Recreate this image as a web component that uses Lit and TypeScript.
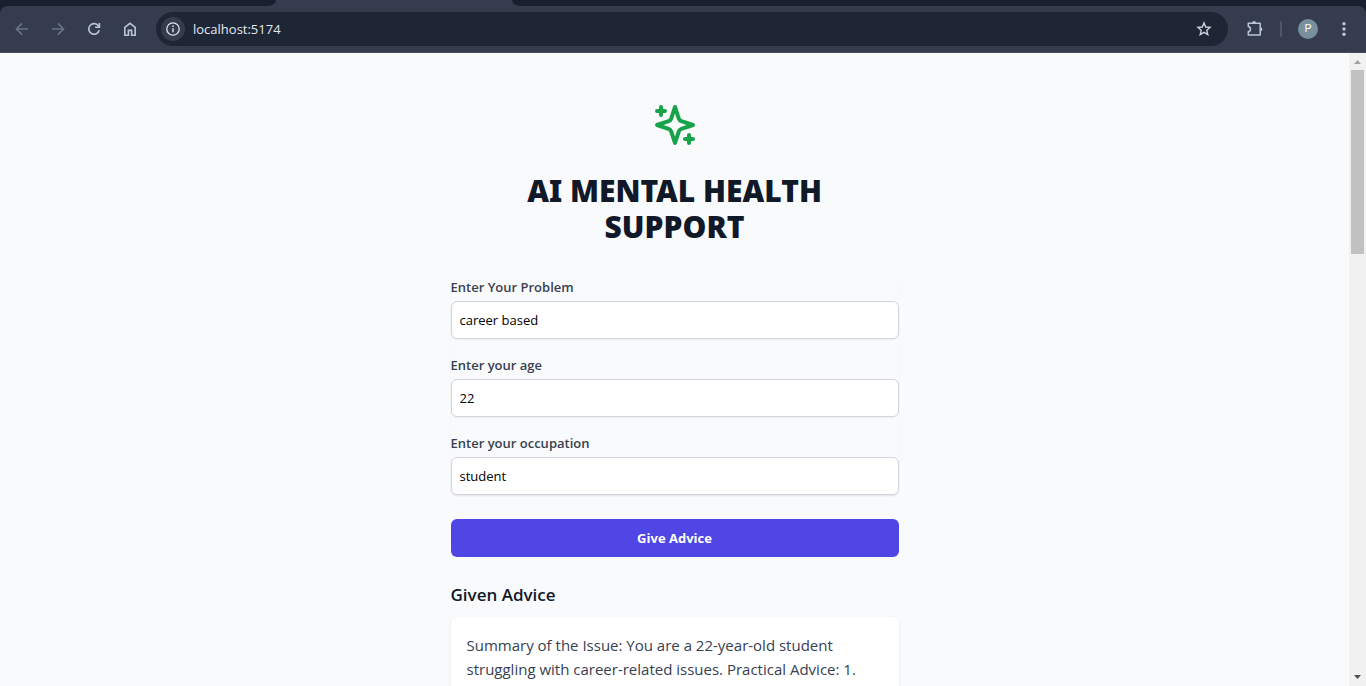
import { LitElement, html, css, svg } from "lit";
import { customElement, state } from "lit/decorators.js";

const icon = (name: string, body: unknown) =>
  html`<svg class="icon ${name}" viewBox="0 0 20 20" width="20" height="20" aria-hidden="true">${body}</svg>`;

@customElement("browser-toolbar")
export class BrowserToolbar extends LitElement {
  static styles = css`
    :host {
      display: block;
      flex: none;
      background: #1a2130;
      font-family: "Open Sans", "Noto Sans", sans-serif;
    }
    .tabs {
      display: flex;
      height: 6px;
      background: #343c4d;
    }
    .tab-left {
      width: 276px;
      background: #18202f;
      border-bottom-right-radius: 8px 6px;
    }
    .tab-active {
      width: 236px;
    }
    .tab-rest {
      flex: 1;
      background: #18202f;
      border-bottom-left-radius: 8px 6px;
    }
    .bar {
      display: flex;
      align-items: center;
      height: 46px;
      padding: 0 12px;
      background: #343c4d;
      border-bottom: 1px solid #454c5a;
      border-radius: 8px 8px 0 0;
      gap: 16px;
    }
    .under {
      background: #18202f;
    }
    button {
      display: grid;
      place-items: center;
      width: 20px;
      height: 20px;
      padding: 0;
      border: 0;
      background: none;
      color: #b9c5d8;
    }
    button:disabled {
      color: #6b7484;
    }
    .icon {
      display: block;
      fill: none;
      stroke: currentColor;
      stroke-width: 1.6;
    }
    .address {
      display: flex;
      align-items: center;
      flex: 1;
      height: 34px;
      padding: 0 14px 0 5px;
      border-radius: 17px;
      background: #1e2636;
    }
    .address .info {
      width: 24px;
      height: 24px;
      border-radius: 12px;
      background: #343c4d;
      color: #dfe3ea;
    }
    .url {
      flex: 1;
      min-width: 0;
      margin-left: 8px;
      padding: 0;
      border: 0;
      outline: 0;
      background: none;
      color: #e3e8f0;
      font: 13px/20px "Open Sans", "Noto Sans", sans-serif;
    }
    .address .star {
      color: #ccd0d8;
    }
    .tools {
      display: flex;
      align-items: center;
      gap: 16px;
    }
    .divider {
      width: 2px;
      height: 16px;
      border-radius: 1px;
      background: #4f5869;
    }
    .avatar {
      border-radius: 50%;
      background: #78909c;
      color: #fff;
      font: 11px/20px Roboto, sans-serif;
    }
  `;

  render() {
    return html`
      <div class="tabs">
        <div class="tab-left"></div>
        <div class="tab-active"></div>
        <div class="tab-rest"></div>
      </div>
      <div class="under">
        <div class="bar">
          <button disabled aria-label="Back">
            ${icon("back", svg`<path d="M16 10H4.6M10 4.4 4.4 10l5.6 5.6" />`)}
          </button>
          <button disabled aria-label="Forward">
            ${icon("forward", svg`<path d="M4 10h11.4M10 4.4l5.6 5.6-5.6 5.6" />`)}
          </button>
          <button aria-label="Reload">
            ${icon("reload", svg`<path d="M15.2 11.2A5.3 5.3 0 1 1 13.9 6.3L15.6 8M15.4 4v4.3h-4.3" />`)}
          </button>
          <button aria-label="Home">
            ${icon("home", svg`<path d="M4.8 8.3 10 4.3l5.2 4v7.9h-3.6v-4.8H8.4v4.8H4.8z" />`)}
          </button>
          <div class="address">
            <button class="info" aria-label="Site information">
              ${icon("site", svg`<circle cx="10" cy="10" r="6.2" stroke-width="1.3" /><path d="M10 9.2v4M10 6.4v1.5" stroke-width="1.4" />`)}
            </button>
            <input class="url" aria-label="Address" value="localhost:5174" />
            <button class="star" aria-label="Bookmark">
              ${icon("bookmark", svg`<path d="m10 3.9 1.7 4.1 4.4.4-3.3 2.9 1 4.3-3.8-2.3-3.8 2.3 1-4.3-3.3-2.9 4.4-.4z" stroke-width="1.4" />`)}
            </button>
          </div>
          <div class="tools">
            <button aria-label="Extensions">
              ${icon("puzzle", svg`<path d="M4.3 4.2h11.9v11.9H4.3v-3.3a2.7 2.7 0 0 0 0-5.3z" stroke-width="1.5" stroke-linejoin="round" /><path d="M8.2 4a1.9 1.9 0 0 1 3.8 0zM16.4 8.2a2 2 0 0 1 0 4z" fill="currentColor" stroke="none" />`)}
            </button>
            <div class="divider"></div>
            <button class="avatar" aria-label="Profile">P</button>
            <button aria-label="Menu">
              ${icon("menu", svg`<g fill="currentColor" stroke="none"><circle cx="10" cy="4.7" r="1.7" /><circle cx="10" cy="10" r="1.7" /><circle cx="10" cy="15.3" r="1.7" /></g>`)}
            </button>
          </div>
        </div>
      </div>
    `;
  }
}

@customElement("app-root")
export class AppRoot extends LitElement {
  static styles = css`
    :host {
      display: flex;
      flex-direction: column;
      height: 100vh;
      overflow: hidden;
      font-family: "Open Sans", "Noto Sans", sans-serif;
      color: #111827;
    }
    * {
      box-sizing: border-box;
    }
    .view {
      display: flex;
      flex: 1;
      min-height: 0;
    }
    .page {
      flex: 1;
      min-width: 0;
      overflow: hidden;
      padding: 48px 16px;
      background: #f9fafc;
    }
    .column {
      max-width: 448px;
      margin: 0 auto;
    }
    .sparkles {
      display: block;
      margin: 0 auto;
      fill: none;
      stroke: #16a34a;
      stroke-width: 2;
      stroke-linecap: round;
      stroke-linejoin: round;
    }
    h1 {
      margin: 24px 0 32px;
      padding: 0 64px;
      font-family: "Noto Sans", "Open Sans", sans-serif;
      font-size: 30px;
      line-height: 36px;
      font-weight: 900;
      text-align: center;
      text-transform: uppercase;
    }
    .fields {
      display: flex;
      flex-direction: column;
      gap: 16px;
      border-radius: 6px;
      box-shadow: 0 1px 2px rgba(0, 0, 0, 0.05);
    }
    label {
      display: block;
      margin-bottom: 4px;
      font-size: 13px;
      line-height: 20px;
      font-weight: 600;
      color: #374151;
    }
    .field input {
      display: block;
      width: 100%;
      height: 38px;
      padding: 8px;
      border: 1px solid #d1d5db;
      border-radius: 6px;
      background: #fff;
      color: #000;
      font: 13px/20px "Open Sans", "Noto Sans", sans-serif;
      box-shadow: 0 1px 2px rgba(0, 0, 0, 0.05);
    }
    .submit {
      display: block;
      width: 100%;
      height: 38px;
      margin: 24px 0;
      border: 0;
      border-radius: 6px;
      background: #4f46e5;
      color: #fff;
      font: 700 13px/20px "Open Sans", "Noto Sans", sans-serif;
    }
    h2 {
      margin: 0 0 8px;
      font-size: 17px;
      line-height: 28px;
      font-weight: 600;
    }
    .advice {
      padding: 16px;
      border-radius: 6px;
      background: #fff;
      box-shadow: 0 1px 3px rgba(0, 0, 0, 0.1);
    }
    .advice p {
      margin: 0;
      font-size: 15px;
      line-height: 24px;
      color: #374151;
    }
    .scrollbar {
      display: flex;
      flex-direction: column;
      align-items: center;
      width: 17px;
      background: #f1f1f1;
    }
    .arrow {
      display: block;
      flex: none;
    }
    .track {
      flex: 1;
      width: 13px;
    }
    .thumb {
      height: 30.7%;
      background: #c1c1c1;
    }
  `;

  @state() private fields = [
    { id: "problem", label: "Enter Your Problem", value: "career based" },
    { id: "age", label: "Enter your age", value: "22" },
    { id: "occupation", label: "Enter your occupation", value: "student" },
  ];

  render() {
    return html`
      <browser-toolbar></browser-toolbar>
      <div class="view">
        <main class="page">
          <div class="column">
            <svg class="sparkles" viewBox="0 0 24 24" width="48" height="48" aria-hidden="true">
              <path d="m12 3-1.912 5.813a2 2 0 0 1-1.275 1.275L3 12l5.813 1.912a2 2 0 0 1 1.275 1.275L12 21l1.912-5.813a2 2 0 0 1 1.275-1.275L21 12l-5.813-1.912a2 2 0 0 1-1.275-1.275L12 3Z" />
              <path d="M5 3v4M19 17v4M3 5h4M17 19h4" />
            </svg>
            <h1>AI Mental Health Support</h1>
            <form @submit=${(e: Event) => e.preventDefault()}>
              <div class="fields">
                ${this.fields.map(
                  (f) => html`
                    <div class="field">
                      <label for=${f.id}>${f.label}</label>
                      <input id=${f.id} type="text" .value=${f.value} />
                    </div>
                  `
                )}
              </div>
              <button class="submit" type="submit">Give Advice</button>
            </form>
            <h2>Given Advice</h2>
            <div class="advice">
              <p>
                Summary of the Issue: You are a 22-year-old student struggling with career-related issues. Practical
                Advice: 1.
              </p>
            </div>
          </div>
        </main>
        <div class="scrollbar" aria-hidden="true">
          <svg class="arrow" width="17" height="17" viewBox="0 0 17 17"><path d="M5 11h7L8.5 7z" fill="#a3a3a3" /></svg>
          <div class="track"><div class="thumb"></div></div>
          <svg class="arrow" width="17" height="17" viewBox="0 0 17 17"><path d="M5 6h7L8.5 10z" fill="#505050" /></svg>
        </div>
      </div>
    `;
  }
}
